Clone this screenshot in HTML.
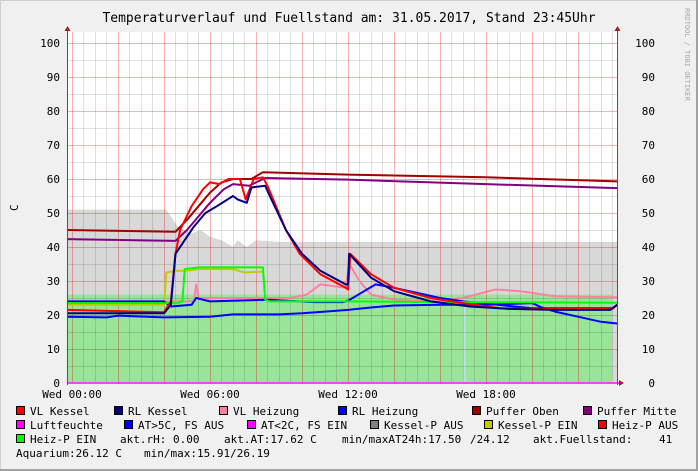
<!DOCTYPE html>
<html><head><meta charset="utf-8"><style>
html,body{margin:0;padding:0;}
body{width:698px;height:471px;overflow:hidden;background:#f0f0f0;}
svg{display:block;font-family:"DejaVu Sans Mono","Liberation Mono",monospace;}
</style></head><body>
<svg width="698" height="471" viewBox="0 0 698 471" xmlns="http://www.w3.org/2000/svg">
<rect x="0" y="0" width="698" height="471" fill="#f0f0f0"/>
<rect x="0.5" y="0.5" width="697" height="470" fill="none" stroke="#cfcfcf"/>
<line x1="0" y1="470" x2="698" y2="470" stroke="#a0a0a0" stroke-width="2"/>
<line x1="697" y1="0" x2="697" y2="471" stroke="#a0a0a0" stroke-width="2"/>
<text x="349" y="22" font-size="13" text-anchor="middle" fill="#000">Temperaturverlauf und Fuellstand am: 31.05.2017, Stand 23:45Uhr</text>
<text transform="translate(685,8) rotate(90)" font-size="7" fill="#aaa">RRDTOOL / TOBI OETIKER</text>
<text transform="translate(18,211) rotate(-90)" font-size="11" fill="#000">C</text>
<rect x="67" y="32" width="550" height="351" fill="#fff"/>
<g transform="translate(72,383) scale(23,-3.4)">
<polygon fill="#d8d8d8" points="-0.22,51 4.1,51 4.3,49 4.6,46 5.2,44 5.6,45 6,43 6.5,42 7,40 7.2,42 7.6,40 8,42 9,41.5 23.7,41.5 23.7,0 -0.22,0"/>
<polygon fill="#98e498" points="-0.22,26 23.48,26 23.48,0 -0.22,0"/>
<rect x="17.0" y="0" width="0.12" height="25" fill="#b8e0e8"/>
</g>
<g id="grid">
<g stroke="#000" stroke-opacity="0.12" stroke-width="1">
<line x1="67" x2="617" y1="366.5" y2="366.5"/><line x1="67" x2="617" y1="332.5" y2="332.5"/><line x1="67" x2="617" y1="298.5" y2="298.5"/><line x1="67" x2="617" y1="264.5" y2="264.5"/><line x1="67" x2="617" y1="230.5" y2="230.5"/><line x1="67" x2="617" y1="196.5" y2="196.5"/><line x1="67" x2="617" y1="162.5" y2="162.5"/><line x1="67" x2="617" y1="128.5" y2="128.5"/><line x1="67" x2="617" y1="94.5" y2="94.5"/><line x1="67" x2="617" y1="60.5" y2="60.5"/>
<line y1="32" y2="383" x1="83.5" x2="83.5"/><line y1="32" y2="383" x1="95.5" x2="95.5"/><line y1="32" y2="383" x1="106.5" x2="106.5"/><line y1="32" y2="383" x1="129.5" x2="129.5"/><line y1="32" y2="383" x1="141.5" x2="141.5"/><line y1="32" y2="383" x1="152.5" x2="152.5"/><line y1="32" y2="383" x1="175.5" x2="175.5"/><line y1="32" y2="383" x1="187.5" x2="187.5"/><line y1="32" y2="383" x1="198.5" x2="198.5"/><line y1="32" y2="383" x1="221.5" x2="221.5"/><line y1="32" y2="383" x1="233.5" x2="233.5"/><line y1="32" y2="383" x1="244.5" x2="244.5"/><line y1="32" y2="383" x1="267.5" x2="267.5"/><line y1="32" y2="383" x1="279.5" x2="279.5"/><line y1="32" y2="383" x1="290.5" x2="290.5"/><line y1="32" y2="383" x1="313.5" x2="313.5"/><line y1="32" y2="383" x1="325.5" x2="325.5"/><line y1="32" y2="383" x1="336.5" x2="336.5"/><line y1="32" y2="383" x1="359.5" x2="359.5"/><line y1="32" y2="383" x1="371.5" x2="371.5"/><line y1="32" y2="383" x1="382.5" x2="382.5"/><line y1="32" y2="383" x1="405.5" x2="405.5"/><line y1="32" y2="383" x1="417.5" x2="417.5"/><line y1="32" y2="383" x1="428.5" x2="428.5"/><line y1="32" y2="383" x1="451.5" x2="451.5"/><line y1="32" y2="383" x1="463.5" x2="463.5"/><line y1="32" y2="383" x1="474.5" x2="474.5"/><line y1="32" y2="383" x1="497.5" x2="497.5"/><line y1="32" y2="383" x1="509.5" x2="509.5"/><line y1="32" y2="383" x1="520.5" x2="520.5"/><line y1="32" y2="383" x1="543.5" x2="543.5"/><line y1="32" y2="383" x1="555.5" x2="555.5"/><line y1="32" y2="383" x1="566.5" x2="566.5"/><line y1="32" y2="383" x1="589.5" x2="589.5"/><line y1="32" y2="383" x1="601.5" x2="601.5"/><line y1="32" y2="383" x1="612.5" x2="612.5"/>
</g>
<g stroke="#e00000" stroke-opacity="0.3" stroke-width="1">
<line x1="67" x2="617" y1="349.5" y2="349.5"/><line x1="67" x2="617" y1="315.5" y2="315.5"/><line x1="67" x2="617" y1="281.5" y2="281.5"/><line x1="67" x2="617" y1="247.5" y2="247.5"/><line x1="67" x2="617" y1="213.5" y2="213.5"/><line x1="67" x2="617" y1="179.5" y2="179.5"/><line x1="67" x2="617" y1="145.5" y2="145.5"/><line x1="67" x2="617" y1="111.5" y2="111.5"/><line x1="67" x2="617" y1="77.5" y2="77.5"/><line x1="67" x2="617" y1="43.5" y2="43.5"/>
<line y1="32" y2="383" x1="72.5" x2="72.5"/><line y1="32" y2="383" x1="118.5" x2="118.5"/><line y1="32" y2="383" x1="164.5" x2="164.5"/><line y1="32" y2="383" x1="210.5" x2="210.5"/><line y1="32" y2="383" x1="256.5" x2="256.5"/><line y1="32" y2="383" x1="302.5" x2="302.5"/><line y1="32" y2="383" x1="348.5" x2="348.5"/><line y1="32" y2="383" x1="394.5" x2="394.5"/><line y1="32" y2="383" x1="440.5" x2="440.5"/><line y1="32" y2="383" x1="486.5" x2="486.5"/><line y1="32" y2="383" x1="532.5" x2="532.5"/><line y1="32" y2="383" x1="578.5" x2="578.5"/>
</g>
</g>
<g transform="translate(72,383) scale(23,-3.4)" fill="none" stroke-width="2" stroke-linejoin="round">
<polyline vector-effect="non-scaling-stroke" stroke="#c8c800" points="-0.22,23 4.0,23 4.1,32.5 4.5,33 5.0,33 5.5,33.5 7.0,33.5 7.5,32.5 8.3,32.8"/>
<polyline vector-effect="non-scaling-stroke" stroke="#ff80a0" points="-0.22,24 5.3,24 5.4,29 5.5,25 9.5,25 10.2,26 10.8,29 11.9,28 12.05,35 12.5,30 13,26 14,24.5 15.6,24 17,25 18.4,27.5 19.5,27 21,25.5 23.7,25.2"/>
<polyline vector-effect="non-scaling-stroke" stroke="#0000ff" points="-0.22,19.5 1.5,19.3 2,19.8 4,19.3 6,19.5 7,20.2 9,20.2 10,20.5 11,21 12,21.5 13,22.2 14,22.8 16,23 18,23 20,23.5 20.5,22 21,21 22,19.5 23,18 23.7,17.5"/>
<polyline vector-effect="non-scaling-stroke" stroke="#0000ff" points="-0.22,24 4.0,24 4.3,22.5 5.2,23 5.4,25 6,24 8.5,24.5 10.5,23.8 11.8,23.8 12,24.2 12.7,27 13.2,29 14,28 15,26.5 16,25 17,24 18.5,23 20,22 22,22 23.5,22 23.7,23"/>
<polyline vector-effect="non-scaling-stroke" stroke="#a00000" points="-0.22,45 4.5,44.5 5,48 5.5,52 6,56 6.5,59 7,60 7.8,60 8.3,62 12,61.3 18,60.5 23.7,59.3"/>
<polyline vector-effect="non-scaling-stroke" stroke="#800080" points="-0.22,42.3 4.5,41.8 5,45 5.5,49 6,53 6.6,57 7,58.5 7.7,58 8.4,60.3 12,59.8 18,58.5 23.7,57.3"/>
<polyline vector-effect="non-scaling-stroke" stroke="#00ff00" points="-0.22,23.5 4.6,23.5 4.8,24 4.9,33.5 5.5,34 8.3,34 8.4,24.5 8.6,24 12,24 16,23.8 20,23.7 23.7,23.6"/>
<polyline vector-effect="non-scaling-stroke" stroke="#ff0000" points="-0.22,21.5 4.0,20.8 4.3,24 4.5,38 4.7,45 5.2,52 5.7,57 6.0,59 6.4,58.5 6.8,60 7.3,60 7.55,54 7.9,60 8.3,60.5 8.5,58 9.3,45 9.9,38 10.8,32 11.9,28 12.0,27.5 12.1,38 13,32 14,28 15.6,25 17,23.5 18.6,22 20,21.8 23.5,21.8 23.7,23"/>
<polyline vector-effect="non-scaling-stroke" stroke="#000080" points="-0.22,20.5 4.0,20.5 4.3,23 4.5,38 4.8,41 5.3,46 5.8,50 6.3,52 7,55 7.2,54 7.6,53 7.8,57.5 8.4,58 8.6,55 9.3,45 10,38 10.8,33 11.9,29 12.0,29 12.05,38 13,31 14,27 15.6,24 17.3,22.5 19,21.8 21,21.5 23.4,21.5 23.7,23"/>
</g>
<line x1="67" x2="620" y1="383" y2="383" stroke="#ff40ff" stroke-width="2"/>
<line x1="67.5" x2="67.5" y1="27" y2="385" stroke="#555"/>
<line x1="617.5" x2="617.5" y1="27" y2="385" stroke="#555"/>
<polygon points="64.5,31 70.5,31 67.5,26" fill="#a02020"/>
<polygon points="614.5,31 620.5,31 617.5,26" fill="#a02020"/>
<polygon points="619,380 624,383 619,386" fill="#a02020"/>
<g font-size="11" fill="#000" text-anchor="end">
<text x="60" y="47">100</text><text x="60" y="81">90</text><text x="60" y="115">80</text><text x="60" y="149">70</text><text x="60" y="183">60</text><text x="60" y="217">50</text><text x="60" y="251">40</text><text x="60" y="285">30</text><text x="60" y="319">20</text><text x="60" y="353">10</text><text x="60" y="387">0</text>
<text x="655" y="47">100</text><text x="655" y="81">90</text><text x="655" y="115">80</text><text x="655" y="149">70</text><text x="655" y="183">60</text><text x="655" y="217">50</text><text x="655" y="251">40</text><text x="655" y="285">30</text><text x="655" y="319">20</text><text x="655" y="353">10</text><text x="655" y="387">0</text>
</g>
<g font-size="11" fill="#000" text-anchor="middle">
<text x="72" y="398">Wed 00:00</text><text x="210" y="398">Wed 06:00</text><text x="348" y="398">Wed 12:00</text><text x="486" y="398">Wed 18:00</text>
</g>
<g font-size="11" fill="#000" stroke="#000" stroke-width="1">
<rect x="16.5" y="406.5" width="8" height="8" fill="#ff0000"/>
<rect x="114.5" y="406.5" width="8" height="8" fill="#000080"/>
<rect x="219.5" y="406.5" width="8" height="8" fill="#ff8098"/>
<rect x="338.5" y="406.5" width="8" height="8" fill="#0000ff"/>
<rect x="472.5" y="406.5" width="8" height="8" fill="#a00000"/>
<rect x="583.5" y="406.5" width="8" height="8" fill="#800080"/>
<rect x="16.5" y="420.5" width="8" height="8" fill="#ff00ff"/>
<rect x="124.5" y="420.5" width="8" height="8" fill="#0000ff"/>
<rect x="247.5" y="420.5" width="8" height="8" fill="#ff00ff"/>
<rect x="370.5" y="420.5" width="8" height="8" fill="#808080"/>
<rect x="484.5" y="420.5" width="8" height="8" fill="#c8c800"/>
<rect x="598.5" y="420.5" width="8" height="8" fill="#ff0000"/>
<rect x="16.5" y="434.5" width="8" height="8" fill="#00ff00"/>
</g>
<g font-size="11" fill="#000" xml:space="preserve">
<text x="30" y="415">VL Kessel</text>
<text x="128" y="415">RL Kessel</text>
<text x="233" y="415">VL Heizung</text>
<text x="352" y="415">RL Heizung</text>
<text x="486" y="415">Puffer Oben</text>
<text x="597" y="415">Puffer Mitte</text>
<text x="30" y="429">Luftfeuchte</text>
<text x="138" y="429">AT&gt;5C, FS AUS</text>
<text x="261" y="429">AT&lt;2C, FS EIN</text>
<text x="384" y="429">Kessel-P AUS</text>
<text x="498" y="429">Kessel-P EIN</text>
<text x="612" y="429">Heiz-P AUS</text>
<text x="30" y="443">Heiz-P EIN</text>
<text x="120" y="443">akt.rH: 0.00</text>
<text x="224" y="443">akt.AT:17.62 C</text>
<text x="342" y="443">min/maxAT24h:17.50</text>
<text x="470" y="443">/24.12</text>
<text x="533" y="443">akt.Fuellstand:</text>
<text x="659" y="443">41</text>
<text x="16" y="457">Aquarium:26.12 C</text>
<text x="144" y="457">min/max:15.91/26.19</text>
</g>
</svg>
</body></html>
